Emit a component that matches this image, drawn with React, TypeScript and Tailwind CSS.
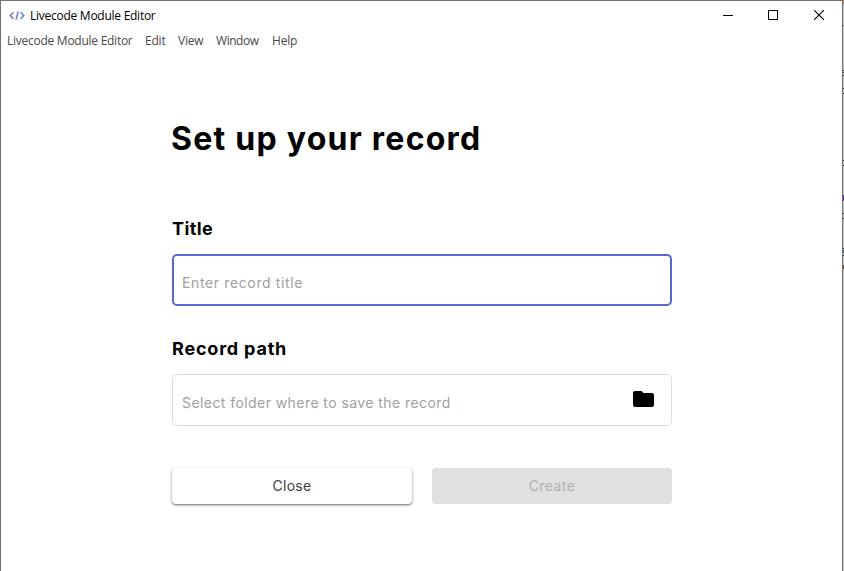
import type { ReactNode } from 'react';

function CodeLogo() {
  return (
    <svg width="16" height="12" viewBox="0 0 16 12" fill="none" stroke="#7d80dc" strokeWidth="1.6">
      <path d="M4.500 2.300 1.200 5.600l3.300 3.300M11.500 2.300l3.300 3.300-3.300 3.300M9.100 1.500 7.100 9.800" />
    </svg>
  );
}

function TitleBar() {
  return (
    <header className="flex h-[29px] items-center justify-between pl-2 font-['Open_Sans',sans-serif] text-[12px] text-black">
      <div className="flex items-center gap-[5px]">
        <CodeLogo />
        <span className="whitespace-nowrap tracking-[-0.26px]">Livecode Module Editor</span>
      </div>
      <div className="flex h-full items-center" aria-label="Window controls">
        <button className="flex h-full w-[45px] items-center justify-center" aria-label="Minimize">
          <svg width="11" height="11" shapeRendering="crispEdges"><path d="M0 5.500h10" stroke="black" /></svg>
        </button>
        <button className="flex h-full w-[45px] items-center justify-center pb-px" aria-label="Maximize">
          <svg width="11" height="10" fill="none" shapeRendering="crispEdges"><path d="M.5.5h9v9h-9z" stroke="black" /></svg>
        </button>
        <button className="flex h-full w-[46px] items-center justify-center pb-px" aria-label="Close window">
          <svg width="10" height="10"><path d="m0 0 10 10M10 0 0 10" stroke="black" strokeWidth="1.1" /></svg>
        </button>
      </div>
    </header>
  );
}

function MenuBar() {
  return (
    <nav className="flex h-[22px] items-center pl-[6px] font-['Open_Sans',sans-serif] text-[12px] text-[#484848]">
      <span className="w-[138px] whitespace-nowrap tracking-[-0.26px]">Livecode Module Editor</span>
      <span className="w-[33px] tracking-[-0.2px]">Edit</span>
      <span className="w-[38px] tracking-[-0.2px]">View</span>
      <span className="w-[56px] tracking-[-0.45px]">Window</span>
      <span className="tracking-[-0.2px]">Help</span>
    </nav>
  );
}

function Label({ children, className }: { children: ReactNode; className: string }) {
  return <h2 className={`h-[27px] text-[18px] leading-[27px] font-bold whitespace-nowrap ${className}`}>{children}</h2>;
}

function BackgroundEdge() {
  return (
    <aside className="flex w-px flex-col bg-[#c6c6c6]">
      <i className="h-1 bg-[#c58b45]" />
      <i className="mt-[21px] h-px bg-[#555]" />
      <i className="mt-[44px] h-px bg-[#333]" />
      <i className="mt-px h-px bg-[#333]" />
      <i className="mt-[2px] h-px bg-[#333]" />
      <i className="mt-[12px] h-px bg-[#333]" />
      <i className="mt-[4px] h-px bg-[#333]" />
      <i className="mt-[66px] h-px bg-[#333]" />
      <i className="mt-[4px] h-px bg-[#333]" />
      <i className="mt-[29px] h-[6px] bg-[#6830b0]" />
      <i className="mt-[12px] h-px bg-[#333]" />
      <i className="mt-[4px] h-px bg-[#333]" />
      <i className="mt-[29px] h-px bg-[#333]" />
      <i className="mt-px h-[3px] bg-[#447c95]" />
      <i className="mt-[2px] h-px bg-[#333]" />
      <i className="mt-[9px] h-[4px] bg-[#704620]" />
    </aside>
  );
}

export default function App() {
  return (
    <div className="flex h-[571px] w-[844px] overflow-hidden text-black">
      <div className="flex w-[843px] flex-col border-t border-r border-l border-[#707070] bg-white">
        <TitleBar />
        <MenuBar />
        <main className="ml-[171px] w-[500px] pt-[63px] font-['Inter',sans-serif]">
          <h1 className="-ml-px h-[48px] text-[32px] leading-[48px] font-bold tracking-[1.25px] whitespace-nowrap">Set up your record</h1>
          <section className="mt-[52px]">
            <Label className="tracking-[0.4px]">Title</Label>
            <div className="mt-[12px] flex h-[52px] items-center rounded-[5px] border-2 border-[#5867cf] px-2 pt-1">
              <span className="text-[14px] tracking-[0.63px] text-[#a0a0a0]">Enter record title</span>
            </div>
          </section>
          <section className="mt-[29px]">
            <Label className="tracking-[0.8px]">Record path</Label>
            <div className="mt-[12px] flex h-[52px] items-center justify-between rounded-[5px] border border-[#dedede] pr-[17px] pl-[9px]">
              <span className="pt-1 text-[14px] tracking-[0.43px] text-[#a0a0a0]">Select folder where to save the record</span>
              <svg width="21" height="16" viewBox="0 0 21 16" fill="black" className="mb-0.5">
                <path d="M2 0h6.500l2 2H19a2 2 0 0 1 2 2v10a2 2 0 0 1-2 2H2a2 2 0 0 1-2-2V2a2 2 0 0 1 2-2z" />
              </svg>
            </div>
          </section>
          <div className="mt-[42px] grid grid-cols-2 gap-5 text-[14px]">
            <button className="h-9 rounded-[4px] bg-white pb-0.5 tracking-[0.3px] text-[#404040] shadow-[0_1px_2px_rgba(0,0,0,.5),0_1px_4px_rgba(0,0,0,.12)]">Close</button>
            <button disabled className="h-9 rounded-[4px] bg-[#e0e0e0] pb-0.5 tracking-[0.45px] text-[#b0b0b0]">Create</button>
          </div>
        </main>
      </div>
      <BackgroundEdge />
    </div>
  );
}
